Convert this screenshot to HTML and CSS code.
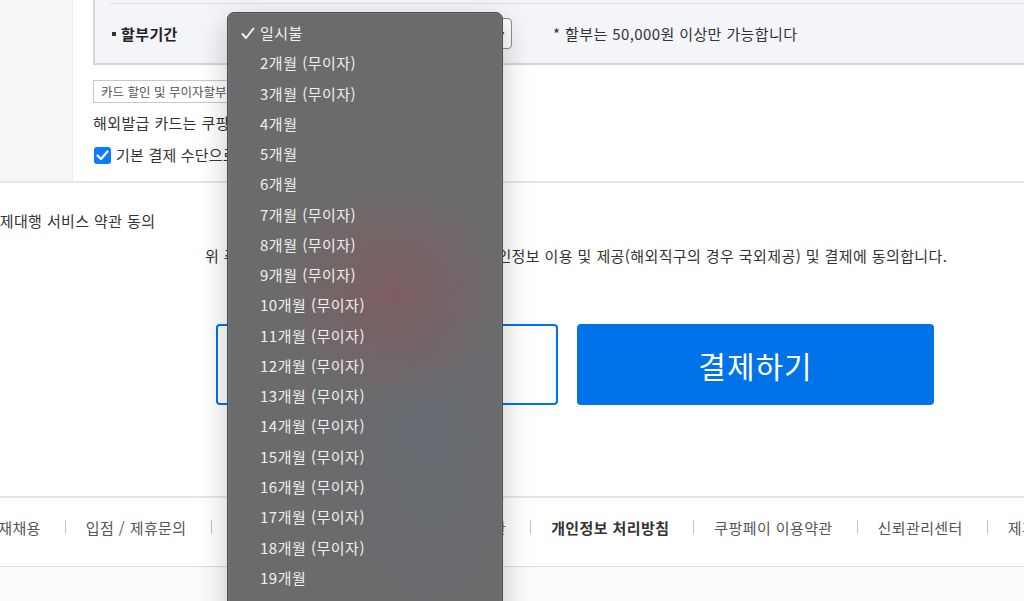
FILE: index.html
```html
<!DOCTYPE html>
<html lang="ko">
<head>
    <meta charset="UTF-8">
    <meta name="viewport" content="width=device-width, initial-scale=1.0">
    <title>결제하기</title>
    <link rel="stylesheet" href="styles.css">
</head>
<body>
    <div class="order-wrap">
        <div class="side"></div>
        <div class="order-main">
            <div class="installment-box">
                <div class="prev-row"></div>
                <div class="installment-row">
                    <div class="row-label">할부기간</div>
                    <div class="select-wrap">
                        <div class="select-box">
                            <span>일시불</span>
                            <svg class="select-arrow" width="8" height="6" viewBox="0 0 8 6"><path d="M1 1.5 L4 4.5 L7 1.5" fill="none" stroke="#333" stroke-width="1.4"/></svg>
                        </div>
                        <ul class="select-menu">
                            <li class="selected">
                                <svg class="check-mark" width="14" height="13" viewBox="0 0 14 13"><path d="M1.5 7 L5 11 L12.5 1.5" fill="none" stroke="#f2f2f2" stroke-width="2" stroke-linecap="round" stroke-linejoin="round"/></svg>
                                일시불
                            </li>
                            <li>2개월 (무이자)</li>
                            <li>3개월 (무이자)</li>
                            <li>4개월</li>
                            <li>5개월</li>
                            <li>6개월</li>
                            <li>7개월 (무이자)</li>
                            <li>8개월 (무이자)</li>
                            <li>9개월 (무이자)</li>
                            <li>10개월 (무이자)</li>
                            <li>11개월 (무이자)</li>
                            <li>12개월 (무이자)</li>
                            <li>13개월 (무이자)</li>
                            <li>14개월 (무이자)</li>
                            <li>15개월 (무이자)</li>
                            <li>16개월 (무이자)</li>
                            <li>17개월 (무이자)</li>
                            <li>18개월 (무이자)</li>
                            <li>19개월</li>
                            <li>20개월</li>
                            <li>21개월</li>
                            <li>22개월</li>
                        </ul>
                    </div>
                    <div class="row-note">* 할부는 50,000원 이상만 가능합니다</div>
                </div>
            </div>

            <button class="card-info-btn">카드 할인 및 무이자할부 안내</button>
            <p class="card-notice">해외발급 카드는 쿠팡페이 결제가 불가능합니다.</p>
            <label class="default-check">
                <span class="checkbox">
                    <svg width="13" height="11" viewBox="0 0 13 11"><path d="M1.5 5.5 L5 9 L11.5 1.5" fill="none" stroke="#fff" stroke-width="2.2" stroke-linecap="round" stroke-linejoin="round"/></svg>
                </span>
                기본 결제 수단으로 사용
            </label>
        </div>
    </div>

    <div class="agree">
        <h3 class="agree-title">결제대행 서비스 약관 동의</h3>
        <p class="agree-text">위 주문 내용을 확인 하였으며, 회원 본인은 개인정보 이용 및 제공(해외직구의 경우 국외제공) 및 결제에 동의합니다.</p>
        <div class="pay-buttons">
            <button class="btn-outline">이전으로</button>
            <button class="btn-pay">결제하기</button>
        </div>
    </div>

    <footer class="footer">
        <ul class="footer-links">
            <li>인재채용</li>
            <li>입점 / 제휴문의</li>
            <li>광고문의</li>
            <li>고객의소리</li>
            <li>이용약관</li>
            <li class="strong">개인정보 처리방침</li>
            <li>쿠팡페이 이용약관</li>
            <li>신뢰관리센터</li>
            <li>제휴마케팅</li>
        </ul>
    </footer>
    <div class="footer-bottom"></div>
</body>
</html>
```

FILE: styles.css
```css
html,
body {
    margin: 0;
    height: 100%;
    overflow: hidden;
}

body {
    font-family: "Noto Sans CJK KR", "Noto Sans", sans-serif;
    font-size: 15px;
    letter-spacing: 0.4px;
    color: #333;
    background-color: #fff;
}

ul {
    margin: 0;
    padding: 0;
    list-style: none;
}

button {
    font-family: inherit;
    letter-spacing: inherit;
    cursor: pointer;
}

/* order area */
.order-wrap {
    display: flex;
    border-bottom: 2px solid #e6e6e6;
}

.side {
    width: 72px;
    background-color: #f6f6f6;
    border-right: 1px solid #ececec;
}

.order-main {
    flex: 1;
    min-width: 0;
    padding: 0 0 16px 20px;
}

.installment-box {
    margin-right: -40px;
    background-color: #f4f5f9;
    border: 2px solid #d4d5d9;
    border-top: 0;
}

.prev-row {
    height: 3px;
    margin-left: 15px;
    border-bottom: 1px solid #dcdde2;
}

.installment-row {
    display: flex;
    align-items: center;
    height: 59px;
    padding-left: 17px;
}

.row-label {
    display: flex;
    align-items: center;
    width: 116px;
    font-weight: bold;
    color: #222;
}

.row-label::before {
    content: "";
    width: 4px;
    height: 4px;
    margin-right: 5px;
    background-color: #333;
}

.select-wrap {
    position: relative;
}

.select-box {
    box-sizing: border-box;
    display: flex;
    align-items: center;
    justify-content: space-between;
    width: 284px;
    height: 31px;
    padding: 0 6px 0 10px;
    background-color: #fff;
    border: 1px solid #8d8d8d;
    border-radius: 4px;
}

.row-note {
    margin-left: 41px;
    color: #333;
}

/* open native-like dropdown */
.select-menu {
    position: absolute;
    top: -6px;
    left: -1px;
    z-index: 10;
    width: 276px;
    box-sizing: border-box;
    padding: 5px 0;
    border: 1px solid #4d4d4d;
    border-radius: 7px;
    background:
        radial-gradient(circle at 165px 280px, rgba(150, 78, 84, 0.45) 0, rgba(150, 78, 84, 0) 115px),
        radial-gradient(ellipse at 200px 420px, rgba(92, 104, 124, 0.3) 0, rgba(92, 104, 124, 0) 130px),
        #6b6b6b;
    box-shadow: 0 10px 30px rgba(0, 0, 0, 0.22), 0 0 0 0.5px rgba(255, 255, 255, 0.15) inset;
}

.select-menu li {
    position: relative;
    height: 30.28px;
    line-height: 30.28px;
    padding-left: 32px;
    font-size: 15px;
    letter-spacing: 0.5px;
    color: #efefef;
    white-space: nowrap;
}

.check-mark {
    position: absolute;
    left: 13px;
    top: 9px;
}

.card-info-btn {
    display: block;
    height: 23px;
    margin-top: 15px;
    padding: 0 7px;
    font-size: 12.5px;
    letter-spacing: 0;
    color: #555;
    background-color: #fff;
    border: 1px solid #c8c8c8;
}

.card-notice {
    margin: 10px 0 0;
    line-height: 20px;
}

.default-check {
    display: flex;
    align-items: center;
    margin-top: 12px;
    line-height: 20px;
    letter-spacing: 0.2px;
}

.checkbox {
    display: flex;
    align-items: center;
    justify-content: center;
    width: 17px;
    height: 17px;
    margin: 0 5px 0 1px;
    background-color: #0b7cff;
    border-radius: 3px;
}

/* agreement */
.agree {
    padding-top: 28px;
}

.agree-title {
    margin: 0 0 0 -14.5px;
    font-size: 15px;
    font-weight: normal;
    line-height: 20px;
    color: #333;
}

.agree-text {
    margin: 15px 0 0;
    padding-left: 205px;
    line-height: 20px;
    white-space: nowrap;
}

.pay-buttons {
    display: flex;
    gap: 19px;
    margin: 58px 0 0 216px;
}

.pay-buttons button {
    height: 81px;
    border-radius: 4px;
    font-size: 30px;
    letter-spacing: 1px;
}

.btn-outline {
    width: 342px;
    color: #0073e9;
    background-color: #fff;
    border: 2px solid #0073e9;
}

.btn-pay {
    width: 357px;
    color: #fff;
    background-color: #0073e9;
    border: none;
}

/* footer */
.footer {
    margin-top: 91px;
    border-top: 2px solid #e6e6e6;
    border-bottom: 1px solid #dddddd;
}

.footer-links {
    display: flex;
    align-items: center;
    height: 68px;
    margin-left: -16px;
    padding-bottom: 10px;
    box-sizing: border-box;
    white-space: nowrap;
    color: #555;
}

.footer-links li {
    display: flex;
    align-items: center;
}

.footer-links li + li::before {
    content: "";
    width: 1px;
    height: 14px;
    margin: 0 20px 0 24px;
    background-color: #c4c4c4;
}

.footer-links .strong {
    font-weight: bold;
    color: #333;
}

.footer-bottom {
    height: 100px;
    background-color: #fbfbfb;
}
```
